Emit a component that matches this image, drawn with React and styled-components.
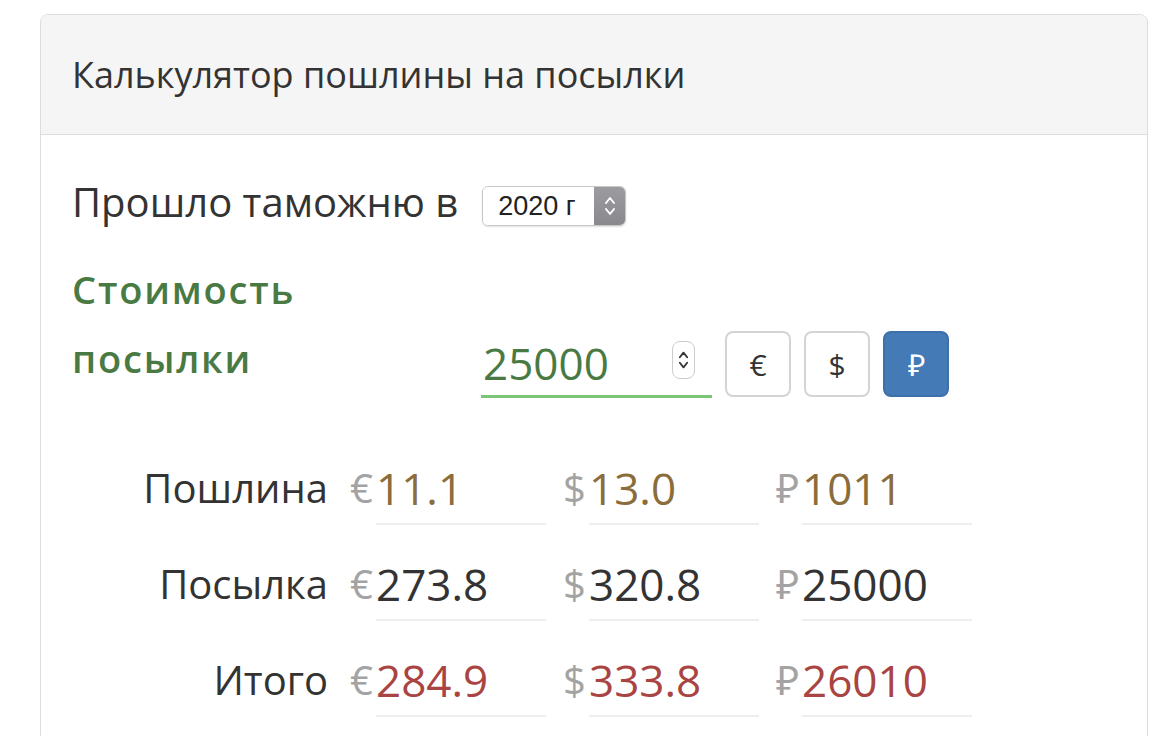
import React from "react"
import styled, { createGlobalStyle } from "styled-components"

const Global = createGlobalStyle`
  body {
    margin: 0;
    background: #fff;
    font-family: "Open Sans", "Noto Sans", sans-serif;
    color: #333;
  }
`

const Card = styled.div`
  margin: 14px 0 0 40px;
  width: 1106px;
  border: 1px solid #ddd;
  border-radius: 8px;
  overflow: hidden;
`

const Header = styled.div`
  height: 119px;
  padding: 0 31px;
  display: flex;
  align-items: center;
  background: #f5f5f5;
  border-bottom: 1px solid #ddd;
  font-size: 36px;
`

const Body = styled.div`
  padding: 40px 31px 40px;
`

const YearRow = styled.div`
  display: flex;
  align-items: center;
  gap: 24px;
  font-size: 40px;
  line-height: 54px;
`

const Select = styled.div`
  display: flex;
  width: 144px;
  height: 40px;
  margin-top: 8px;
  box-sizing: border-box;
  border: 1px solid #c6c6c6;
  border-radius: 6px;
  overflow: hidden;
  box-shadow: 0 1px 2px rgba(0, 0, 0, 0.12);
  font-family: "Liberation Sans", Arial, sans-serif;
  font-size: 27px;
`

const SelectText = styled.div`
  flex: 1;
  display: flex;
  align-items: center;
  padding-left: 15px;
  color: #222;
  background: #fff;
`

const SelectArrows = styled.div`
  width: 31px;
  display: flex;
  align-items: center;
  justify-content: center;
  background: linear-gradient(#9b9ba0, #88888d);
`

const CostRow = styled.div`
  display: flex;
  align-items: flex-start;
  margin-top: 26px;
`

const CostLabel = styled.div`
  width: 409px;
  font-size: 38px;
  font-weight: 600;
  letter-spacing: 1.8px;
  line-height: 69px;
  color: #4a7a44;
`

const Controls = styled.div`
  display: flex;
  align-items: flex-start;
  margin-top: 76px;
`

const AmountField = styled.div`
  position: relative;
  width: 229px;
  height: 64px;
  display: flex;
  align-items: center;
  border-bottom: 3px solid #7cc576;
  font-size: 44px;
  font-weight: 500;
  color: #4a7a44;
  padding-left: 2px;
`

const Spinner = styled.div`
  position: absolute;
  right: 17px;
  top: 10px;
  width: 23px;
  height: 38px;
  box-sizing: border-box;
  border: 1px solid #ccc;
  border-radius: 8px;
  display: flex;
  align-items: center;
  justify-content: center;
  background: #fff;
`

const Currencies = styled.div`
  display: flex;
  gap: 13px;
  margin-left: 13px;
`

const CurrencyButton = styled.button`
  width: 66px;
  height: 66px;
  box-sizing: border-box;
  border-radius: 8px;
  border: 2px solid ${(p) => (p.active ? "#3d6fa8" : "#d4d4d4")};
  background: ${(p) => (p.active ? "#447ab5" : "#fff")};
  color: ${(p) => (p.active ? "#fff" : "#333")};
  font-family: "Open Sans", sans-serif;
  font-size: 30px;
  padding: 0;
`

const Results = styled.div`
  margin-top: 63px;
`

const ResultRow = styled.div`
  display: flex;
  align-items: flex-start;
  margin-bottom: 32px;
`

const RowLabel = styled.div`
  width: 256px;
  margin-right: 22px;
  text-align: right;
  font-size: 40px;
  line-height: 54px;
`

const Cell = styled.div`
  display: flex;
  width: 213px;
`

const Symbol = styled.div`
  width: 26px;
  font-size: 40px;
  line-height: 54px;
  color: #a3a3a3;
`

const Value = styled.div`
  width: 170px;
  padding-bottom: 8px;
  border-bottom: 2px solid #eee;
  font-size: 44px;
  font-weight: 500;
  line-height: 54px;
  color: ${(p) => p.color};
`

const Chevrons = ({ color, w = 12, h = 24 }) => (
  <svg width={w} height={h} viewBox="0 0 12 24" fill="none" stroke={color} strokeWidth="2" strokeLinecap="round" strokeLinejoin="round">
    <path d="M2 9 L6 4 L10 9" />
    <path d="M2 15 L6 20 L10 15" />
  </svg>
)

const rows = [
  { label: "Пошлина", color: "#8a6d3b", values: ["11.1", "13.0", "1011"] },
  { label: "Посылка", color: "#333", values: ["273.8", "320.8", "25000"] },
  { label: "Итого", color: "#a94442", values: ["284.9", "333.8", "26010"] },
]

const symbols = ["€", "$", "₽"]

export default function App() {
  return (
    <>
      <Global />
      <Card>
        <Header>Калькулятор пошлины на посылки</Header>
        <Body>
          <YearRow>
            Прошло таможню в
            <Select>
              <SelectText>2020 г</SelectText>
              <SelectArrows>
                <Chevrons color="#fff" w={12} h={26} />
              </SelectArrows>
            </Select>
          </YearRow>
          <CostRow>
            <CostLabel>
              Стоимость
              <br />
              посылки
            </CostLabel>
            <Controls>
              <AmountField>
                25000
                <Spinner>
                  <Chevrons color="#333" w={11} h={26} />
                </Spinner>
              </AmountField>
              <Currencies>
                <CurrencyButton>€</CurrencyButton>
                <CurrencyButton>$</CurrencyButton>
                <CurrencyButton active>₽</CurrencyButton>
              </Currencies>
            </Controls>
          </CostRow>
          <Results>
            {rows.map((r) => (
              <ResultRow key={r.label}>
                <RowLabel>{r.label}</RowLabel>
                {r.values.map((v, i) => (
                  <Cell key={i}>
                    <Symbol>{symbols[i]}</Symbol>
                    <Value color={r.color}>{v}</Value>
                  </Cell>
                ))}
              </ResultRow>
            ))}
          </Results>
        </Body>
      </Card>
    </>
  )
}
